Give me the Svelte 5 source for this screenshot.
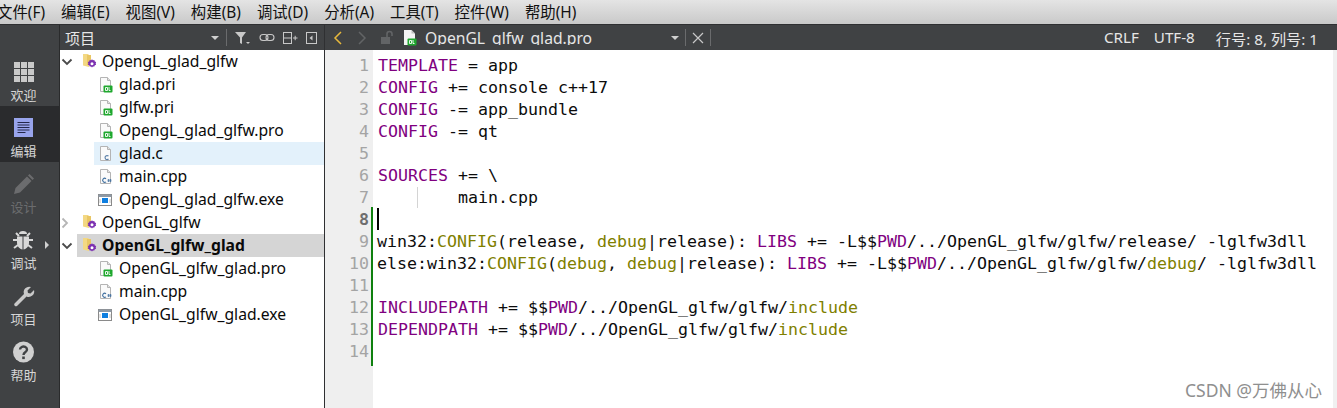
<script>
  const menus = ['文件(F)', '编辑(E)', '视图(V)', '构建(B)', '调试(D)', '分析(A)', '工具(T)', '控件(W)', '帮助(H)'];
  const side = [
    { label: '欢迎', icon: 'welcome' },
    { label: '编辑', icon: 'edit', active: true },
    { label: '设计', icon: 'design', dim: true },
    { label: '调试', icon: 'debug', arrow: true },
    { label: '项目', icon: 'project' },
    { label: '帮助', icon: 'help' }
  ];
  const tree = [
    { t: 'OpengL_glad_glfw', kind: 'folder', caret: 'open' },
    { t: 'glad.pri', kind: 'qt', child: true },
    { t: 'glfw.pri', kind: 'qt', child: true },
    { t: 'OpengL_glad_glfw.pro', kind: 'qt', child: true },
    { t: 'glad.c', kind: 'c', child: true, hover: true },
    { t: 'main.cpp', kind: 'cpp', child: true },
    { t: 'OpengL_glad_glfw.exe', kind: 'exe', child: true },
    { t: 'OpenGL_glfw', kind: 'folder', caret: 'closed' },
    { t: 'OpenGL_glfw_glad', kind: 'folder', caret: 'open', sel: true },
    { t: 'OpenGL_glfw_glad.pro', kind: 'qt', child: true },
    { t: 'main.cpp', kind: 'cpp', child: true },
    { t: 'OpenGL_glfw_glad.exe', kind: 'exe', child: true }
  ];
  const P = 'p', O = 'o', N = '';
  const code = [
    [['TEMPLATE', P], [' = app', N]],
    [['CONFIG', P], [' += console c++17', N]],
    [['CONFIG', P], [' -= app_bundle', N]],
    [['CONFIG', P], [' -= qt', N]],
    [],
    [['SOURCES', P], [' += \\', N]],
    [['        main.cpp', N]],
    [],
    [['win32:', N], ['CONFIG', O], ['(release, ', N], ['debug', O], ['|release): ', N], ['LIBS', P], [' += -L$$', N], ['PWD', P], ['/../OpenGL_glfw/glfw/release/ -lglfw3dll', N]],
    [['else:win32:', N], ['CONFIG', O], ['(', N], ['debug', O], [', ', N], ['debug', O], ['|release): ', N], ['LIBS', P], [' += -L$$', N], ['PWD', P], ['/../OpenGL_glfw/glfw/', N], ['debug', O], ['/ -lglfw3dll', N]],
    [],
    [['INCLUDEPATH', P], [' += $$', N], ['PWD', P], ['/../OpenGL_glfw/glfw/', N], ['include', O]],
    [['DEPENDPATH', P], [' += $$', N], ['PWD', P], ['/../OpenGL_glfw/glfw/', N], ['include', O]],
    []
  ];
</script>

{#snippet qtBadge(x, y)}
  <rect x={x} y={y} width="9" height="7" rx="1" fill="#1fa82e" />
  <path d="M{x + 2} {y + 2}h2v3h-2zM{x + 5.5} {y + 1.5}v3.5h1.5" fill="none" stroke="#fff" stroke-width="0.9" />
{/snippet}

{#snippet sheet()}
  <path d="M2.5 1.5h7l3 3v11h-10z" fill="#fafafa" stroke="#b4b4b4" />
  <path d="M9.5 1.5v3h3" fill="#e2e2e2" stroke="#b4b4b4" />
{/snippet}

{#snippet fileIcon(kind)}
  {#if kind === 'folder'}
    <svg class="ico folder" width="17" height="17" viewBox="0 0 17 17">
      <path d="M2 1h5l1 1v12l-6-1.500z" fill="#f3d883" />
      <path d="M6 2h4v10h-4z" fill="#e9c664" />
      <path d="M11 6.200l.9 1.100 1.400-.2.500 1.300 1.300.6-.4 1.400.4 1.300-1.300.6-.5 1.300-1.400-.2-.9 1.100-.9-1.100-1.400.2-.5-1.300-1.300-.6.4-1.300-.4-1.400 1.300-.6.500-1.300 1.400.2z" fill="#7b2fb0" />
      <circle cx="11" cy="10.700" r="1.500" fill="#fff" />
    </svg>
  {:else if kind === 'exe'}
    <svg class="ico" width="15" height="14" viewBox="0 0 15 14">
      <rect x="0.500" y="1.500" width="13" height="11" fill="#fff" stroke="#8a8a8a" />
      <rect x="0.500" y="1.500" width="13" height="2.500" fill="#8f9aa5" />
      <rect x="4" y="5" width="6" height="5" fill="#0f7fe0" />
      <path d="M2 6v4M12 6v4" stroke="#c4c4c4" />
    </svg>
  {:else}
    <svg class="ico" width="15" height="17" viewBox="0 0 15 17">
      {@render sheet()}
      {#if kind === 'qt'}
        {@render qtBadge(5.500, 9.500)}
      {:else if kind === 'c'}
        <path d="M10.500 11.200a2 2 0 1 0 0 2.800" fill="none" stroke="#5a7fa8" stroke-width="1.100" />
      {:else}
        <path d="M8 10.800a2 2 0 1 0 0 3" fill="none" stroke="#3f6f9f" stroke-width="1.100" />
        <path d="M10.500 11v3M12.500 11v3M9.500 12h4M9.500 13h4" stroke="#3f6f9f" stroke-width="0.700" />
      {/if}
    </svg>
  {/if}
{/snippet}

{#snippet sideIcon(name)}
  {#if name === 'welcome'}
    <svg width="24" height="24" viewBox="0 0 24 24" fill="#c9c9c9">
      <rect x="2" y="2" width="6" height="6" /><rect x="9" y="2" width="6" height="6" /><rect x="16" y="2" width="6" height="6" />
      <rect x="2" y="9" width="6" height="6" /><rect x="9" y="9" width="6" height="6" /><rect x="16" y="9" width="6" height="6" />
      <rect x="2" y="16" width="6" height="6" /><rect x="9" y="16" width="6" height="6" /><rect x="16" y="16" width="6" height="6" />
    </svg>
  {:else if name === 'edit'}
    <svg width="24" height="24" viewBox="0 0 24 24">
      <rect x="2" y="2" width="19" height="19" fill="#98a4ec" />
      <path d="M5.500 6.500h12M5.500 9h12M5.500 11.500h12M5.500 14h12M5.500 16.500h8" stroke="#24284a" stroke-width="1" />
    </svg>
  {:else if name === 'design'}
    <svg width="24" height="24" viewBox="0 0 24 24" fill="#6b6c6e">
      <path d="M2 22l1.500-6L15 4.500l4.500 4.500L8 20.500z" />
      <path d="M16 3.500l1.500-1.500 4.500 4.500-1.500 1.500z" />
    </svg>
  {:else if name === 'debug'}
    <svg width="24" height="24" viewBox="0 0 24 24">
      <path d="M4 5l3 3M18 5l-3 3M1 12h4M21 12h-4M2 20l4-3M20 20l-4-3" stroke="#d8d8d8" stroke-width="2" />
      <path d="M7 6a4 3 0 0 1 8 0z" fill="#d8d8d8" />
      <path d="M5 8.500l5.500 0v13c-3-.5-5.500-3-5.500-7zM17 8.500l-5.500 0v13c3-.5 5.500-3 5.500-7z" fill="#d8d8d8" />
    </svg>
  {:else if name === 'project'}
    <svg width="24" height="24" viewBox="0 0 24 24">
      <path d="M2.500 19.500L12 10a5.500 5.500 0 0 1 7-7l-3.500 3.500.5 2.500 2.500.5L22 6a5.500 5.500 0 0 1-7.500 6.500L5 22a1.800 1.800 0 0 1-2.500-2.500z" fill="#c9c9c9" />
    </svg>
  {:else}
    <svg width="24" height="24" viewBox="0 0 24 24">
      <circle cx="11.500" cy="12" r="10.500" fill="#d0d0d0" />
      <path d="M8 9.500a3.500 3 0 1 1 5.500 2.500c-1.500 1-2 1.500-2 3" fill="none" stroke="#404244" stroke-width="2.400" />
      <rect x="10.200" y="16.500" width="2.600" height="2.600" fill="#404244" />
    </svg>
  {/if}
{/snippet}

<div class="app">
  <nav class="menu">
    {#each menus as m}<span>{m}</span>{/each}
  </nav>
  <div class="body">
    <aside class="rail">
      <div class="rail-head"></div>
      {#each side as s}
        <div class="rail-item" class:active={s.active} class:dim={s.dim}>
          {@render sideIcon(s.icon)}
          <span>{s.label}</span>
          {#if s.arrow}<i class="rail-arrow"></i>{/if}
        </div>
      {/each}
    </aside>

    <section class="panel">
      <header class="bar panel-bar">
        <span class="panel-title">项目</span>
        <i class="tri"></i>
        <i class="vsep"></i>
        <svg width="18" height="16" viewBox="0 0 18 16"><path d="M1 2h11L8 7.500V14l-2-1V7.500z" fill="#c8c8c8" /><path d="M12 12h4l-2 2z" fill="#c8c8c8" /></svg>
        <svg width="16" height="16" viewBox="0 0 16 16" fill="none" stroke="#c8c8c8" stroke-width="1.100"><rect x="1" y="4.500" width="8" height="6" rx="3" /><rect x="7" y="4.500" width="8" height="6" rx="3" /></svg>
        <svg width="16" height="16" viewBox="0 0 16 16" fill="none" stroke="#c8c8c8"><rect x="1.500" y="2.500" width="8" height="11" /><path d="M1.500 8h8M11 8h4.500M13.200 5.800v4.400" /></svg>
        <svg width="14" height="16" viewBox="0 0 14 16"><rect x="1.500" y="2.500" width="10" height="11" fill="none" stroke="#c8c8c8" /><path d="M7.500 5.500v5L4.500 8z" fill="#c8c8c8" /></svg>
      </header>
      <ul class="tree">
        {#each tree as n}
          <li class="row">
            <span class="indent" class:deep={n.child}>
              {#if n.caret === 'open'}
                <svg width="12" height="8" viewBox="0 0 12 8"><path d="M1.500 1.500L6 6l4.500-4.500" fill="none" stroke="#4a4a4a" stroke-width="1.800" /></svg>
              {:else if n.caret === 'closed'}
                <svg width="8" height="12" viewBox="0 0 8 12"><path d="M1.500 1.500L6 6l-4.500 4.500" fill="none" stroke="#b5b5b5" stroke-width="1.800" /></svg>
              {/if}
            </span>
            <span class="cell" class:hover={n.hover} class:sel={n.sel} class:child={n.child}>
              {@render fileIcon(n.kind)}
              <span class="name">{n.t}</span>
            </span>
          </li>
        {/each}
      </ul>
    </section>

    <section class="editor">
      <header class="bar edit-bar">
        <svg class="nav" width="12" height="16" viewBox="0 0 12 16"><path d="M9 2L3 8l6 6" fill="none" stroke="#e8b93c" stroke-width="1.500" /></svg>
        <svg class="nav second" width="12" height="16" viewBox="0 0 12 16"><path d="M3 2l6 6-6 6" fill="none" stroke="#626466" stroke-width="1.500" /></svg>
        <svg class="lock" width="16" height="16" viewBox="0 0 16 16"><rect x="1" y="7" width="9" height="7" fill="#626466" /><path d="M7 7V4a2.500 2.500 0 0 1 5 0v2" fill="none" stroke="#626466" stroke-width="1.600" /></svg>
        <svg class="tabfile" width="15" height="17" viewBox="0 0 15 17"><path d="M2 1h7.500L13 4.500V16H2z" fill="#f4f4f4" /><path d="M9.500 1v3.500H13z" fill="#bdbdbd" />{@render qtBadge(5.500, 9.500)}</svg>
        <span class="tab-clip"><span>OpenGL_glfw_glad.pro</span></span>
        <i class="tri"></i>
        <i class="vsep"></i>
        <svg class="close" width="12" height="12" viewBox="0 0 12 12"><path d="M1 1l10 10M11 1L1 11" stroke="#c8c8c8" stroke-width="1.200" /></svg>
        <i class="vsep"></i>
        <span class="status">
          <span>CRLF</span><span>UTF-8</span><span class="pos">行号: 8, 列号: 1</span>
        </span>
      </header>
      <div class="content">
        <div class="gutter">
          {#each code as _, i}
            <div class="num" class:cur={i === 7}>{i + 1}</div>
          {/each}
        </div>
        <div class="lines">
          <i class="changed"></i>
          <i class="guide"></i>
          <i class="caret"></i>
          {#each code as line, i}
            <div class="line" class:flush={i === 8 || i === 9}>{#each line as [text, cls]}<span class={cls}>{text}</span>{/each}</div>
          {/each}
          <span class="mark">CSDN @万佛从心</span>
        </div>
        <div class="scroll"></div>
      </div>
    </section>
  </div>
</div>

<style>
  :global(body) { margin: 0; background: #fff; }
  .app {
    width: 1337px; height: 408px; overflow: hidden;
    display: flex; flex-direction: column;
    font-family: "Noto Sans", "Noto Sans CJK SC", sans-serif;
  }
  .menu {
    height: 25px; box-sizing: border-box; flex: none;
    display: flex; gap: 16px; align-items: center;
    padding-bottom: 1px; border-bottom: 1px solid #2f3032;
    background: linear-gradient(#e4e4e4, #c9c9c9);
    font-size: 15.400px; color: #111; white-space: nowrap;
  }
  .menu span { display: block; }
  .menu span:first-child { margin-left: -3px; }
  .body { flex: 1; display: flex; min-height: 0; }
  .rail { width: 59px; flex: none; background: #404244; border-right: 1px solid #2a2b2c; }
  .rail-head { height: 25px; }
  .rail-item {
    position: relative; height: 56px; box-sizing: border-box;
    display: flex; flex-direction: column; align-items: center; justify-content: flex-start;
    color: #d6d6d6; font-size: 13px; line-height: 18px; padding: 10px 12px 0 0; gap: 0;
  }
  .rail-item svg { display: block; flex: none; }
  .rail-item.active { background: #2a2b2d; }
  .rail-item.dim { color: #6b6c6e; }
  .rail-item span { margin-top: 2px; }
  .rail-arrow {
    position: absolute; right: 10px; top: 23px;
    border-left: 4px solid #d0d0d0; border-top: 4px solid transparent; border-bottom: 4px solid transparent;
  }
  .bar {
    height: 25px; flex: none; background: #404244; color: #e6e6e6;
    display: flex; align-items: center;
  }
  .panel { width: 264px; flex: none; display: flex; flex-direction: column; border-right: 1px solid #2f3032; }
  .panel-bar { padding: 0 5px 0 5px; gap: 7px; }
  .panel-title { font-size: 15px; margin-right: auto; }
  .tri { border-top: 4px solid #cfcfcf; border-left: 4px solid transparent; border-right: 4px solid transparent; margin-top: 1px; }
  .vsep { width: 1px; height: 17px; background: #6a6b6d; }
  .tree { list-style: none; margin: 0; padding: 0; flex: 1; background: #fff; }
  .row { height: 23px; display: flex; }
  .indent { width: 17px; flex: none; display: flex; align-items: center; padding-left: 1px; box-sizing: border-box; }
  .indent.deep { width: 34px; }
  .cell { flex: 1; display: flex; align-items: center; padding-left: 4px; gap: 4px; font-size: 15.700px; line-height: 21px; color: #0a0a0a; }
  .cell.child { padding-left: 4px; gap: 6px; }
  .name { display: block; margin-top: -1px; white-space: nowrap; }
  .cell.hover { background: #e3f1fb; }
  .cell.sel { background: #d5d5d5; font-weight: 700; }
  .ico { flex: none; display: block; }
  .editor { flex: 1; min-width: 0; display: flex; flex-direction: column; }
  .edit-bar { padding-left: 7px; }
  .second { margin-left: 12px; }
  .lock { margin-left: 12px; }
  .tabfile { margin-left: 6px; }
  .tab-clip {
    display: block; height: 17px; overflow: hidden; margin: 3px 0 0 8px; align-self: flex-start;
    font-size: 15.700px; line-height: 20px; color: #e6e6e6; width: 243px; white-space: nowrap;
  }
  .edit-bar > .tri { margin-left: 3px; }
  .edit-bar > .vsep { margin-left: 6px; }
  .close { margin-left: 6px; }
  .edit-bar > .close + .vsep { margin-left: 6px; }
  .status { margin-left: auto; display: flex; gap: 15px; padding-right: 19px; font-size: 15.200px; }
  .status .pos { margin-left: 6px; }
  .content { flex: 1; display: flex; min-height: 0; background: #fff; padding-top: 0; }
  .gutter {
    width: 46px; flex: none; background: #efefef; padding-top: 5px; box-sizing: border-box;
    text-align: right; color: #a4a4a4;
    font: 16.610px/22px "DejaVu Sans Mono", monospace;
  }
  .num { padding-right: 2px; }
  .num.cur { font-weight: 700; color: #6e6e6e; }
  .lines {
    position: relative; flex: 1; min-width: 0; padding: 5px 0 0 0;
    font: 16.610px/22px "DejaVu Sans Mono", monospace; color: #0c0c0c;
    border-left: 2px solid #efefef;
  }
  .changed { position: absolute; left: -2px; top: 157px; width: 2px; height: 159px; background: #0f800f; }
  .line { height: 22px; padding-left: 5px; white-space: pre; }
  .line.flush { padding-left: 4px; }
  .guide { position: absolute; left: 44px; top: 137px; width: 1px; height: 21px; background: #d4d4d4; }
  .caret { position: absolute; left: 4px; top: 158px; width: 2px; height: 22px; background: #000; }
  .p { color: #800080; }
  .o { color: #808000; }
  .mark {
    position: absolute; right: 11px; bottom: 7px; color: #8f8f8f;
    font: 17.500px/22px "Noto Sans", "Noto Sans CJK SC", sans-serif;
  }
  .scroll { width: 4px; flex: none; background: #f0f0f0; }
</style>
